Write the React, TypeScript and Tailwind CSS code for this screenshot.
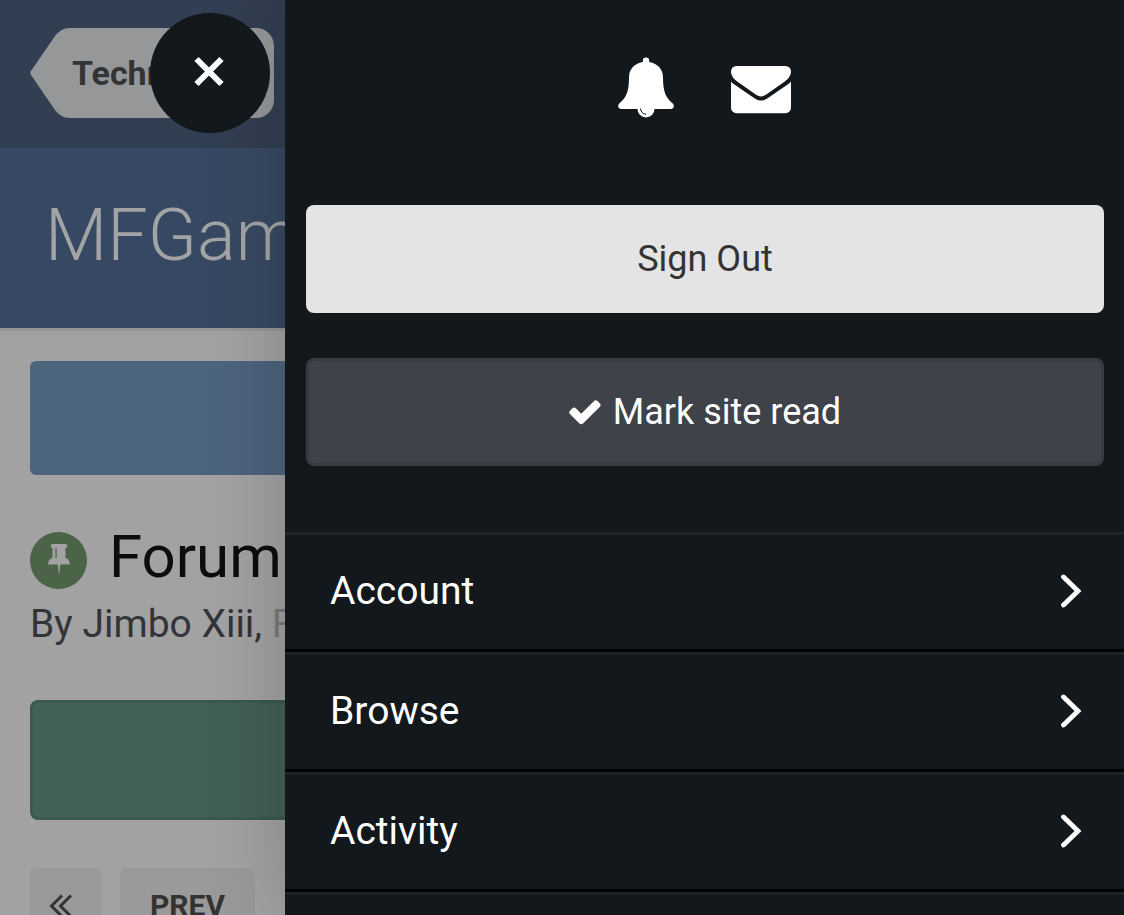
import React from 'react';

interface MenuItem {
  id: string;
  label: string;
}

const menuItems: MenuItem[] = [
  { id: 'account', label: 'Account' },
  { id: 'browse', label: 'Browse' },
  { id: 'activity', label: 'Activity' },
];

const BellIcon = () => (
  <svg viewBox="0 0 56 61" className="w-[56px] h-[61px]" aria-hidden="true">
    <path
      fill="currentColor"
      d="M28 0.5a3.2 3.2 0 0 1 3.2 3.2v1.4C40 6.6 45 12.5 45 20.5c0 14.5 3 20.500 10 26.200 1.800 2.300 0.600 5.300-2.200 5.300H3.200C0.400 52-0.800 49 1 46.700c7-5.700 10-11.700 10-26.200C11 12.500 16 6.600 24.800 5.100V3.700A3.200 3.200 0 0 1 28 0.500z"
    />
    <circle cx="28" cy="52" r="8.500" fill="currentColor" />
    <path d="M22.500 51.500c0.300 3.500 2.500 5.500 5.500 5.800" fill="none" stroke="#12181b" strokeWidth="1" />
  </svg>
);

const EnvelopeIcon = () => (
  <svg viewBox="0 0 60 48" className="w-[60px] h-[48px]" aria-hidden="true">
    <path
      fill="currentColor"
      d="M5.500 0h49A5.500 5.500 0 0 1 60 5.500c0 4-3 7.800-6.200 10L36 28c-2 1.400-4 2.400-6 2.400s-4-1-6-2.400L6.200 15.500C3 13.300 0 9.500 0 5.500A5.500 5.500 0 0 1 5.500 0z"
    />
    <path
      fill="currentColor"
      d="M0 15.500c1 1.200 2.200 2.200 3.400 3L20.500 30.200c3.200 2.200 6 4.300 9.500 4.300s6.300-2.100 9.500-4.300l17.100-11.700c1.200-0.800 2.400-1.800 3.400-3v26.300a5.400 5.400 0 0 1-5.400 5.400H5.400A5.400 5.400 0 0 1 0 41.800z"
    />
  </svg>
);

const CloseIcon = () => (
  <svg viewBox="0 0 32 32" className="w-8 h-8" aria-hidden="true">
    <path d="M3.500 3l25 25M28.500 3l-25 25" stroke="currentColor" strokeWidth="6" />
  </svg>
);

const CheckIcon = () => (
  <svg viewBox="0 0 32 25" className="w-8 h-[25px]" aria-hidden="true">
    <path
      fill="currentColor"
      d="M30.900 6.700L14 23.600c-1 1-2.500 1-3.500 0L1 14.100c-1-1-1-2.300 0-3.300l2.500-2.500c1-1 2.300-1 3.300 0l5.400 5.400L25.100 0.900c1-1 2.300-1 3.300 0l2.500 2.500c1 1 1 2.300 0 3.300z"
    />
  </svg>
);

const ChevronIcon = () => (
  <svg viewBox="0 0 22 34" className="w-[22px] h-[34px]" aria-hidden="true">
    <path d="M3.500 3L18 17 3.500 31" fill="none" stroke="currentColor" strokeWidth="4.800" strokeLinecap="round" />
  </svg>
);

const PinIcon = () => (
  <svg viewBox="0 0 22 32" className="w-[22px] h-8" aria-hidden="true">
    <path
      fill="currentColor"
      d="M4.500 0h13c2.400 0 2.400 4 0 4v10c2.700 0.600 4.500 3.700 4.500 6.500h-9.700L11 31.500l-1.300-11H0C0 17.700 1.800 14.600 4.500 14V4c-2.400 0-2.400-4 0-4z"
    />
    <path d="M8 5v8.500" stroke="#4b6447" strokeWidth="1.300" strokeLinecap="round" />
  </svg>
);

const DoubleLeftIcon = () => (
  <svg viewBox="0 0 24 24" className="w-6 h-6" aria-hidden="true">
    <path d="M13 1.500L2.500 12 13 22.500M22 1.500L11.500 12 22 22.500" fill="none" stroke="currentColor" strokeWidth="3" />
  </svg>
);

const ForumPage: React.FC = () => (
  <div className="w-[285px] shrink-0 overflow-hidden whitespace-nowrap bg-[#a2a2a2]">
    <header>
      <div className="h-[148px] bg-[#323e51] pl-[30px] pr-[11px] pt-7">
        <a href="#technical" className="flex h-[90px] text-[#333435]">
          <svg viewBox="0 0 42 90" className="w-[42px] h-[90px] shrink-0" aria-hidden="true">
            <path fill="#959798" d="M42 0H40C33.500 0 28.500 3.500 25 8L1 43q-1.500 2 0 4L25 82C28.500 86.500 33.500 90 40 90H42z" />
          </svg>
          <span className="flex flex-1 items-center rounded-r-[18px] bg-[#959798] text-[34px] font-bold">
            Techn
          </span>
        </a>
      </div>
      <div className="flex h-[183px] items-center border-b-[3px] border-[#949594] bg-[#374962] pb-1 pl-[45px]">
        <span className="text-[72px] leading-none font-light text-[#a2a3a5]">MFGam</span>
      </div>
    </header>

    <main className="pl-[30px] pt-[30px]">
      <div className="h-[114px] rounded-l-md bg-[#4d647d]" />
      <div className="mt-12 flex h-[74px] items-center gap-[22px]">
        <span className="flex h-[57px] w-[57px] shrink-0 items-center justify-center rounded-full bg-[#4b6447] text-[#a2a2a2]">
          <PinIcon />
        </span>
        <h1 className="pb-[6px] text-[60px] leading-none text-[#0d0d0d]">Forum</h1>
      </div>
      <p className="mt-[2px] h-[50px] text-[39px] leading-[50px] text-[#333438]">
        By Jimbo Xiii, <span className="text-[#77797c]">F</span>
      </p>
      <div className="mt-[51px] h-[120px] rounded-l-lg border-3 border-r-0 border-[#3d584c] bg-[#426053]" />
      <nav className="mt-12 flex gap-[18px] text-[#333333]">
        <button aria-label="First page" className="flex h-[75px] w-[72px] items-center justify-center rounded-md bg-[#9a9a9a] pr-[10px]">
          <DoubleLeftIcon />
        </button>
        <button className="h-[75px] w-[135px] rounded-md bg-[#9a9a9a] text-[30px] font-bold">PREV</button>
      </nav>
    </main>
  </div>
);

const Drawer: React.FC = () => (
  <aside className="relative min-w-0 flex-1 bg-[#12181b] text-white shadow-[0_0_75px_rgba(0,0,0,0.2)]">
    <button
      aria-label="Close menu"
      className="absolute top-[13px] left-[-135px] flex h-[120px] w-[120px] items-center justify-center rounded-full bg-[#12181b] pr-[2px] pb-[2px]"
    >
      <CloseIcon />
    </button>

    <div className="flex h-[205px] items-start justify-center gap-[57px] pt-[57px]">
      <button aria-label="Notifications">
        <BellIcon />
      </button>
      <button aria-label="Messages" className="mt-[9px]">
        <EnvelopeIcon />
      </button>
    </div>

    <div className="flex flex-col gap-[45px] pr-5 pl-[21px] text-[36px]">
      <button className="h-[108px] rounded-lg bg-[#e4e4e4] text-[#333333]">Sign Out</button>
      <button className="flex h-[108px] items-center justify-center gap-3 rounded-lg border-3 border-[#3a3b3f] bg-[#3f4248]">
        <CheckIcon />
        Mark site read
      </button>
    </div>

    <ul className="mt-[66px] border-b-3 border-[#1f2427]">
      {menuItems.map((item) => (
        <li key={item.id} className="border-t-3 border-b-3 border-t-[#1f2427] border-b-black">
          <button className="flex h-[114px] w-full items-center justify-between pr-[42px] pb-[2px] pl-[45px] text-[39px]">
            {item.label}
            <ChevronIcon />
          </button>
        </li>
      ))}
    </ul>
  </aside>
);

const App: React.FC = () => {
  return (
    <div className="flex h-screen overflow-hidden font-['Roboto',sans-serif]">
      <ForumPage />
      <Drawer />
    </div>
  );
};

export default App;
